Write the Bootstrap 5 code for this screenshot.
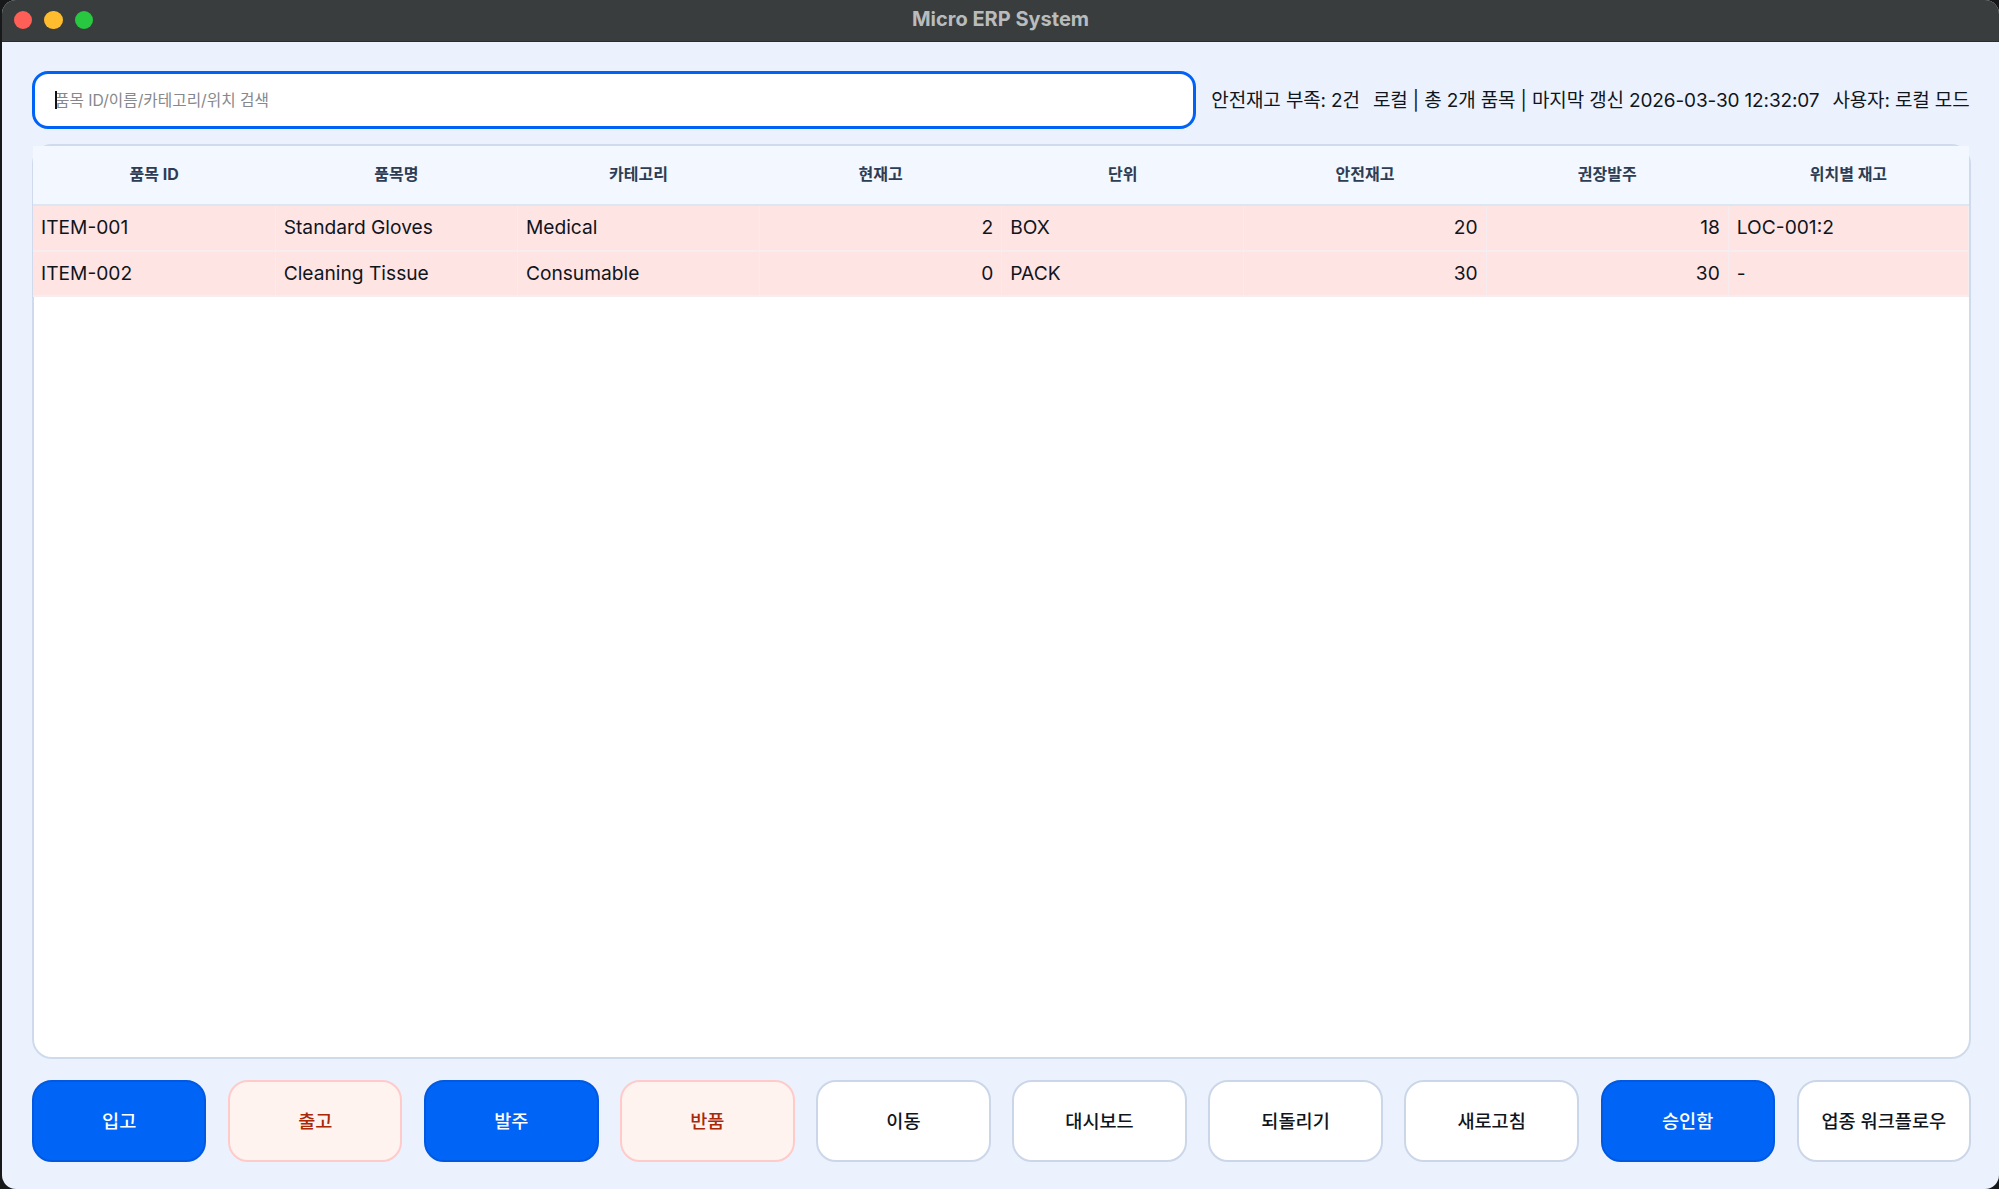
<!DOCTYPE html>
<html lang="ko">
<head>
  <meta charset="UTF-8">
  <meta name="viewport" content="width=device-width, initial-scale=1.0">
  <title>Micro ERP System</title>
  <link href="https://cdn.jsdelivr.net/npm/bootstrap@5.3.0/dist/css/bootstrap.min.css" rel="stylesheet">
  <style>
    html, body {
      height: 100%;
      background: #17181a;
      font-family: Inter, "Noto Sans CJK KR", sans-serif;
      overflow: hidden;
    }
    .erp-window {
      height: 100vh;
      margin-left: 2px;
      background: #ebf2fd;
      border-radius: 14px;
      overflow: hidden;
    }
    .erp-titlebar {
      height: 42px;
      background: #3a3d3e;
      border-bottom: 1px solid #2a2c2d;
      position: relative;
    }
    .erp-dot {
      width: 18.5px;
      height: 18.5px;
      border-radius: 50%;
    }
    .dot-red { background: #ff5f57; }
    .dot-yellow { background: #febc2e; }
    .dot-green { background: #28c840; }
    .erp-lights {
      position: absolute;
      left: 11.5px;
      top: 10.5px;
      gap: 12px;
    }
    .erp-title {
      color: #b9bcbd;
      font-size: 20px;
      font-weight: 700;
      margin-bottom: 3px;
    }
    .erp-body {
      padding: 29px 28px 27px 30px;
      gap: 15px;
      min-height: 0;
    }
    .erp-searchwrap {
      flex: 0 0 1164px;
      position: relative;
    }
    .erp-search {
      height: 58px;
      border: 3px solid #0063f5;
      border-radius: 16px;
      padding: 0 20px;
      font-size: 15.7px;
      box-shadow: none !important;
    }
    .erp-search:focus { border-color: #0063f5; }
    .erp-search::placeholder { color: #85888c; }
    .erp-caret {
      position: absolute;
      left: 23px;
      top: 20px;
      width: 1.5px;
      height: 18px;
      background: #111;
    }
    .erp-status {
      font-size: 19px;
      color: #10151c;
      white-space: nowrap;
      letter-spacing: -0.14px;
      margin-right: 1.5px;
      padding-top: 2px;
    }
    .erp-status span + span { margin-left: 13px; }
    .erp-card {
      flex: 1 1 0;
      min-height: 0;
      background: #fff;
      border: 2px solid #cfdbed;
      border-radius: 20px;
    }
    .erp-table {
      table-layout: fixed;
      margin: 0 0 0 -1px;
      width: calc(100% + 1px);
      font-size: 19.2px;
      color: #10151c;
    }
    .erp-table th {
      height: 59px;
      background: #f3f7ff;
      color: #2d3d54;
      font-size: 16px;
      font-weight: 700;
      text-align: center;
      vertical-align: middle;
      border-bottom: 2px solid #dde6f3;
      padding: 0 8px 2px;
    }
    .erp-table th:not(:last-child) { width: 242.2px; }
    .erp-table td {
      height: 45.5px;
      background: #ffe4e4;
      color: #10151c;
      padding: 0 8px;
      vertical-align: middle;
      border-bottom: 2px solid #f7ecef;
      border-right: 1px solid #f6ecf0;
    }
    .erp-actions {
      gap: 21.7px;
      margin-top: 6px;
    }
    .erp-btn {
      flex: 1 1 0;
      height: 82px;
      border-radius: 20px;
      font-size: 18.6px;
      font-weight: 500;
      padding: 2px 0 0;
      border: 2px solid #cbd7e9;
      background: #fff;
      color: #10151c;
    }
    .erp-btn.is-blue {
      background: #0064f6;
      border-color: #0059e0;
      color: #fff;
    }
    .erp-btn.is-red {
      background: #fff3f0;
      border-color: #ffcaca;
      color: #a82808;
    }
  </style>
</head>
<body>

<div class="erp-window d-flex flex-column">
  <div class="erp-titlebar d-flex align-items-center justify-content-center flex-shrink-0">
    <div class="erp-lights d-flex">
      <div class="erp-dot dot-red"></div>
      <div class="erp-dot dot-yellow"></div>
      <div class="erp-dot dot-green"></div>
    </div>
    <div class="erp-title">Micro ERP System</div>
  </div>

  <div class="erp-body d-flex flex-column flex-grow-1">
    <div class="d-flex align-items-center">
      <div class="erp-searchwrap">
        <input type="text" class="form-control erp-search" placeholder="품목 ID/이름/카테고리/위치 검색">
        <div class="erp-caret"></div>
      </div>
      <div class="erp-status ms-auto">
        <span>안전재고 부족: 2건</span><span>로컬 | 총 2개 품목 | 마지막 갱신 2026-03-30 12:32:07</span><span>사용자: 로컬 모드</span>
      </div>
    </div>

    <div class="erp-card">
      <table class="table erp-table">
        <thead>
          <tr>
            <th>품목 ID</th><th>품목명</th><th>카테고리</th><th>현재고</th><th>단위</th><th>안전재고</th><th>권장발주</th><th>위치별 재고</th>
          </tr>
        </thead>
        <tbody>
          <tr>
            <td>ITEM-001</td><td>Standard Gloves</td><td>Medical</td><td class="text-end">2</td><td>BOX</td><td class="text-end">20</td><td class="text-end">18</td><td>LOC-001:2</td>
          </tr>
          <tr>
            <td>ITEM-002</td><td>Cleaning Tissue</td><td>Consumable</td><td class="text-end">0</td><td>PACK</td><td class="text-end">30</td><td class="text-end">30</td><td>-</td>
          </tr>
        </tbody>
      </table>
    </div>

    <div class="erp-actions d-flex flex-shrink-0">
      <button class="btn erp-btn is-blue">입고</button>
      <button class="btn erp-btn is-red">출고</button>
      <button class="btn erp-btn is-blue">발주</button>
      <button class="btn erp-btn is-red">반품</button>
      <button class="btn erp-btn">이동</button>
      <button class="btn erp-btn">대시보드</button>
      <button class="btn erp-btn">되돌리기</button>
      <button class="btn erp-btn">새로고침</button>
      <button class="btn erp-btn is-blue">승인함</button>
      <button class="btn erp-btn">업종 워크플로우</button>
    </div>
  </div>
</div>

</body>
</html>
